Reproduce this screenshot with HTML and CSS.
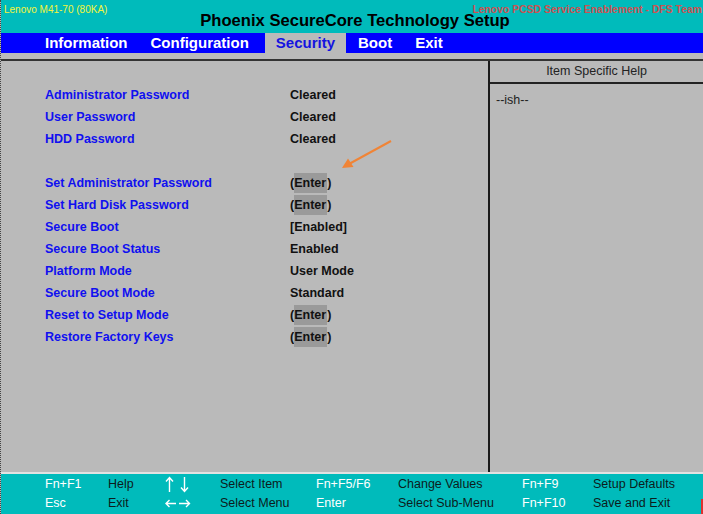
FILE: index.html
```html
<!DOCTYPE html>
<html>
<head>
<meta charset="utf-8">
<link rel="stylesheet" href="styles.css">
</head>
<body>
<div class="screen">
  <header class="top">
    <div class="top-row">
      <span class="model">Lenovo M41-70 (80KA)</span>
      <span class="team">Lenovo PCSD Service Enablement - DFS Team</span>
    </div>
    <div class="title">Phoenix SecureCore Technology Setup</div>
  </header>
  <nav class="menu">
    <span class="tab">Information</span>
    <span class="tab">Configuration</span>
    <span class="tab active">Security</span>
    <span class="tab">Boot</span>
    <span class="tab">Exit</span>
  </nav>
  <div class="strip"></div>
  <main class="main">
    <section class="items">
      <div class="row"><span class="label">Administrator Password</span><span class="value">Cleared</span></div>
      <div class="row"><span class="label">User Password</span><span class="value">Cleared</span></div>
      <div class="row"><span class="label">HDD Password</span><span class="value">Cleared</span></div>
      <div class="row"></div>
      <div class="row"><span class="label">Set Administrator Password</span><span class="value">(<span class="hl">Enter</span>)</span></div>
      <div class="row"><span class="label">Set Hard Disk Password</span><span class="value">(<span class="hl">Enter</span>)</span></div>
      <div class="row"><span class="label">Secure Boot</span><span class="value">[Enabled]</span></div>
      <div class="row"><span class="label">Secure Boot Status</span><span class="value">Enabled</span></div>
      <div class="row"><span class="label">Platform Mode</span><span class="value">User Mode</span></div>
      <div class="row"><span class="label">Secure Boot Mode</span><span class="value">Standard</span></div>
      <div class="row"><span class="label">Reset to Setup Mode</span><span class="value">(<span class="hl">Enter</span>)</span></div>
      <div class="row"><span class="label">Restore Factory Keys</span><span class="value">(<span class="hl">Enter</span>)</span></div>
    </section>
    <aside class="help">
      <div class="help-head">Item Specific Help</div>
      <div class="help-body">--ish--</div>
    </aside>
  </main>
  <footer class="keys">
    <span class="k">Fn+F1</span><span class="d">Help</span>
    <span class="k"><svg class="arr" width="26" height="19" viewBox="0 0 26 19" aria-label="↑ ↓"><path d="M4.5 3V17M1 6.5L4.5 2.5L8 6.5M19.5 2V16M16 12.5L19.5 16.5L23 12.5" fill="none" stroke="#fff" stroke-width="1.4"/></svg></span>
    <span class="d">Select Item</span><span class="k">Fn+F5/F6</span><span class="d">Change Values</span><span class="k">Fn+F9</span><span class="d">Setup Defaults</span>
    <span class="k">Esc</span><span class="d">Exit</span>
    <span class="k"><svg class="arr" width="26" height="19" viewBox="0 0 26 19" aria-label="← →"><path d="M1 9.5H11M4.5 6L1 9.5L4.5 13M14 9.5H24.5M21 6L24.5 9.5L21 13" fill="none" stroke="#fff" stroke-width="1.4"/></svg></span>
    <span class="d">Select Menu</span><span class="k">Enter</span><span class="d">Select Sub-Menu</span><span class="k">Fn+F10</span><span class="d">Save and Exit</span>
  </footer>
  <svg class="pointer" width="703" height="514" viewBox="0 0 703 514">
    <line x1="391" y1="141" x2="349" y2="164" stroke="#f08436" stroke-width="2"/>
    <polygon points="342,168 353.5,167 348,158.5" fill="#f08436"/>
  </svg>
  <div class="redmark"></div>
</div>
</body>
</html>
```
FILE: styles.css
```css
html, body {
  margin: 0;
  padding: 0;
  background: #bababa;
  overflow: hidden;
}
.screen {
  position: relative;
  width: 702px;
  height: 514px;
  border-left: 1px dotted #444;
  font-family: "Liberation Sans", Arial, sans-serif;
  display: flex;
  flex-direction: column;
}
.top {
  height: 33px;
  background: #00bbbb;
  display: flex;
  flex-direction: column;
}
.top-row {
  display: flex;
  justify-content: space-between;
  padding: 5px 0 0 3px;
  height: 10px;
  line-height: 10px;
}
.model {
  font-size: 10px;
  color: #f4f43c;
}
.team {
  font-size: 10.4px;
  font-weight: bold;
  color: #cc5252;
  margin-right: 1px;
}
.title {
  margin-top: -3px;
  padding-left: 6px;
  text-align: center;
  font-size: 16.6px;
  line-height: 18px;
  font-weight: bold;
  color: #000;
}
.menu {
  height: 20px;
  background: #0000ff;
  display: flex;
  padding-left: 33px;
  gap: 1px;
}
.tab {
  padding: 0 11px;
  font-size: 15px;
  line-height: 20px;
  font-weight: bold;
  color: #fff;
}
.tab.active {
  margin-left: 4px;
  background: #bababa;
  color: #1414e0;
}
.strip {
  height: 6px;
  border-bottom: 2px solid #333;
}
.main {
  height: 411px;
  display: flex;
}
.items {
  width: 443px;
  border-right: 2px solid #1a1a1a;
  padding: 23px 0 0 44px;
  display: flex;
  flex-direction: column;
}
.row {
  height: 22px;
  display: grid;
  grid-template-columns: 245px 1fr;
  align-items: center;
  font-size: 12.5px;
  font-weight: bold;
}
.label { color: #1010f0; }
.value { color: #111; }
.hl {
  background: #9a9a9a;
  padding: 3px 1px 3px 0;
}
.help {
  flex: 1;
  display: flex;
  flex-direction: column;
  font-size: 12.5px;
  color: #222;
}
.help-head {
  height: 21px;
  line-height: 21px;
  text-align: center;
  border-bottom: 2px solid #222;
}
.help-body {
  padding: 8px 0 0 6px;
  line-height: 16px;
}
.keys {
  height: 39px;
  border-top: 2px solid #e2e2e2;
  background: #00bbbb;
  padding: 1px 0 0 44px;
  display: grid;
  grid-template-columns: 63px 57px 55px 96px 82px 124px 71px 1fr;
  grid-auto-rows: 19px;
  font-size: 12.5px;
  line-height: 19px;
}
.k { color: #fff; }
.d { color: #0c1c1c; }
.arr {
  display: block;
}
.pointer {
  position: absolute;
  left: -1px;
  top: 0;
}
.redmark {
  position: absolute;
  right: 0;
  bottom: 0;
  width: 2px;
  height: 15px;
  background: #e03030;
}
```
